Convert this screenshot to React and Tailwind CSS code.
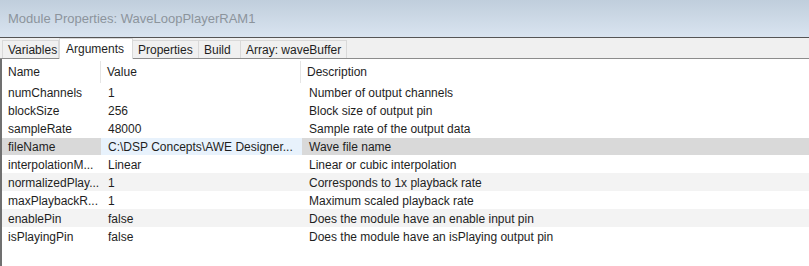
import React from "react";

const rows = [
  ["numChannels", "1", "Number of output channels"],
  ["blockSize", "256", "Block size of output pin"],
  ["sampleRate", "48000", "Sample rate of the output data"],
  ["fileName", "C:\\DSP Concepts\\AWE Designer...", "Wave file name"],
  ["interpolationM...", "Linear", "Linear or cubic interpolation"],
  ["normalizedPlay...", "1", "Corresponds to 1x playback rate"],
  ["maxPlaybackR...", "1", "Maximum scaled playback rate"],
  ["enablePin", "false", "Does the module have an enable input pin"],
  ["isPlayingPin", "false", "Does the module have an isPlaying output pin"],
];

const tabs = [
  { label: "Variables", w: "w-[57px]" },
  { label: "Arguments", w: "w-[74px]", active: true },
  { label: "Properties", w: "w-[66px]" },
  { label: "Build", w: "w-[42px]" },
  { label: "Array: waveBuffer", w: "w-[106px]" },
];

export default function App() {
  return (
    <div className="w-[809px] h-[266px] bg-white overflow-hidden text-[12px] text-[#1e1e1e] font-['Liberation_Sans',Arial,sans-serif]">
      <div className="h-[37px] bg-gradient-to-b from-[#c0cedc] to-[#d9e4f0] flex items-center pl-2 pt-px text-[13px] text-[#8c949c]">
        Module Properties: WaveLoopPlayerRAM1
      </div>
      <div className="h-px bg-[#555]" />
      <div className="h-[21px] bg-[#f0f0f0] border-b border-[#8c8c8c] flex items-end pl-[2px]">
        {tabs.map((t) =>
          t.active ? (
            <div
              key={t.label}
              className={`${t.w} shrink-0 whitespace-nowrap h-[21px] -mb-px bg-white border-x border-t border-[#d9d9d9] px-[6px] pt-[2px] leading-[16px]`}
            >
              {t.label}
            </div>
          ) : (
            <div
              key={t.label}
              className={`${t.w} shrink-0 whitespace-nowrap h-[18px] border-t border-r border-[#d9d9d9] first:border-l px-[5px] leading-[18px]`}
            >
              {t.label}
            </div>
          )
        )}
      </div>
      <div className="border-l-2 border-[#707070] h-full">
        <div className="flex h-[24px] items-center pt-[2px]">
          <div className="w-[99px] pl-[6px] border-r border-[#e5e5e5] h-full flex items-center">Name</div>
          <div className="w-[200px] pl-[6px] border-r border-[#e5e5e5] h-full flex items-center">Value</div>
          <div className="flex-1 pl-[6px]">Description</div>
        </div>
        {rows.map((r, i) => {
          const sel = i === 3;
          const alt = i === 5 || i === 7;
          return (
            <div key={r[0]} className={`flex h-[18px] items-center pt-px ${alt ? "bg-[#f3f3f3]" : ""}`}>
              <div className={`w-[99px] pl-[6px] h-full flex items-center ${sel ? "bg-[#d9d9d9]" : ""}`}>{r[0]}</div>
              <div className={`w-[201px] pl-[7px] h-full flex items-center ${sel ? "bg-[#e8f2fc]" : ""}`}>{r[1]}</div>
              <div className={`flex-1 pl-[7px] h-full flex items-center ${sel ? "bg-[#d9d9d9]" : ""}`}>{r[2]}</div>
            </div>
          );
        })}
      </div>
    </div>
  );
}
